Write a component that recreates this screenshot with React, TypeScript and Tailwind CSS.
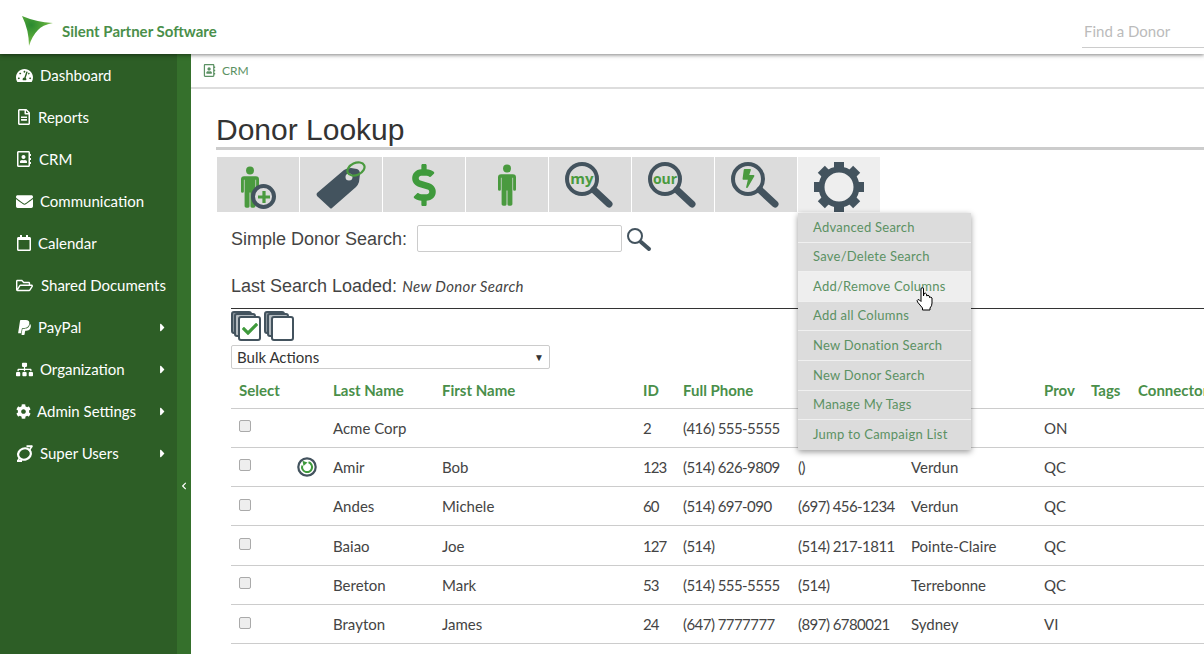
import {
  FaTachometerAlt,
  FaRegFileAlt,
  FaRegAddressBook,
  FaEnvelope,
  FaRegCalendar,
  FaRegFolderOpen,
  FaPaypal,
  FaSitemap,
  FaCog,
  FaCaretRight,
  FaChevronLeft,
  FaDollarSign,
  FaBolt,
  FaCheck,
} from "react-icons/fa"
import type { ReactNode } from "react"

const green = "#4a9a3f"
const slate = "#43535e"

function SuperIcon() {
  return (
    <svg viewBox="0 0 17 17" className="w-[17px] h-[17px]" fill="none" stroke="currentColor">
      <ellipse cx="8.500" cy="9" rx="6.500" ry="5.600" strokeWidth="2.200" transform="rotate(-20 8.500 9)" />
      <path d="M1 16 H6 M10.500 1.300 H16.500" strokeWidth="2" />
      <path d="M16 1 L13 6 M1.500 16 L4 12.500" strokeWidth="1.500" />
    </svg>
  )
}

const navItems: { label: string; icon: ReactNode; gap: string; arrow?: boolean }[] = [
  { label: "Dashboard", icon: <FaTachometerAlt size={17} />, gap: "w-[24px]" },
  { label: "Reports", icon: <FaRegFileAlt size={16} />, gap: "w-[22px]" },
  { label: "CRM", icon: <FaRegAddressBook size={16} />, gap: "w-[23px]" },
  { label: "Communication", icon: <FaEnvelope size={17} />, gap: "w-[24px]" },
  { label: "Calendar", icon: <FaRegCalendar size={16} />, gap: "w-[22px]" },
  { label: "Shared Documents", icon: <FaRegFolderOpen size={17} />, gap: "w-[25px]" },
  { label: "PayPal", icon: <FaPaypal size={17} />, gap: "w-[22px]", arrow: true },
  { label: "Organization", icon: <FaSitemap size={17} />, gap: "w-[24px]", arrow: true },
  { label: "Admin Settings", icon: <FaCog size={15} />, gap: "w-[21px]", arrow: true },
  { label: "Super Users", icon: <SuperIcon />, gap: "w-[24px]", arrow: true },
]

function Person({ className }: { className?: string }) {
  return (
    <svg viewBox="0 0 20 46" className={className} fill={green}>
      <circle cx="10" cy="4.600" r="4.400" />
      <path d="M3.500 11 H16.500 Q20 11 20 14.500 V28 Q20 29.500 18.300 29.500 Q16.800 29.500 16.800 28 V15 H16 V44.500 Q16 46 14 46 H12 Q10.500 46 10.500 44.500 V29 H9.500 V44.500 Q9.500 46 8 46 H6 Q4 46 4 44.500 V15 H3.200 V28 Q3.200 29.500 1.700 29.500 Q0 29.500 0 28 V14.500 Q0 11 3.500 11 Z" />
    </svg>
  )
}

function Magnifier({ children }: { children?: ReactNode }) {
  return (
    <div className="relative w-[50px] h-[50px] mt-[-3px]">
      <svg viewBox="0 0 50 50" className="w-[50px] h-[50px]" fill="none" stroke={slate}>
        <circle cx="17" cy="21" r="15" strokeWidth="4" />
        <path d="M29 32 L44 46" strokeWidth="7" strokeLinecap="round" />
      </svg>
      <div className="absolute left-0 top-0 w-[34px] h-[40px] flex items-center justify-center">{children}</div>
    </div>
  )
}

function Gear() {
  const teeth = [0, 45, 90, 135, 180, 225, 270, 315]
  return (
    <svg viewBox="0 0 50 50" className="w-[50px] h-[50px] mt-[5px]">
      {teeth.map((a) => (
        <rect key={a} x="20" y="0" width="10" height="8" fill={slate} transform={`rotate(${a} 25 25)`} />
      ))}
      <circle cx="25" cy="25" r="17.500" fill="none" stroke={slate} strokeWidth="6" />
    </svg>
  )
}

const tools: { node: ReactNode; light?: boolean }[] = [
  {
    node: (
      <div className="relative w-[38px] h-[47px]">
        <Person className="absolute left-[2px] top-[5px] w-[18px] h-[42px]" />
        <div className="absolute left-[12px] top-[23px] w-[25px] h-[25px] rounded-full border-[4px] border-[#43535e] bg-[#dcdcdc] flex items-center justify-center">
          <svg viewBox="0 0 12 12" className="w-[12px] h-[12px]" fill="none" stroke="#4a9a3f" strokeWidth="3.200">
            <path d="M6 0 V12 M0 6 H12" />
          </svg>
        </div>
      </div>
    ),
  },
  {
    node: (
      <div className="relative w-[50px] h-[50px]">
        <svg viewBox="0 0 50 50" className="w-[50px] h-[50px]">
          <path d="M1 33 L28 10 Q31 8 35 8 L41 9 Q44 10 44 14 L43 22 Q42 25 40 27 L16 48 Q15 49 14 48 L1 36 Q0 34 1 33 Z" fill={slate} />
          <circle cx="33" cy="17" r="3.500" fill="#dcdcdc" />
          <ellipse cx="40" cy="9" rx="9" ry="6" fill="none" stroke="#4a9a3f" strokeWidth="2.200" transform="rotate(-25 40 9)" />
        </svg>
      </div>
    ),
  },
  { node: <FaDollarSign size={42} color="#3f9a3c" /> },
  { node: <Person className="w-[18px] h-[42px]" /> },
  {
    node: (
      <Magnifier>
        <span className="text-[#4a9a3f] text-[15px] font-bold font-['Open_Sans',sans-serif]">my</span>
      </Magnifier>
    ),
  },
  {
    node: (
      <Magnifier>
        <span className="text-[#4a9a3f] text-[14px] font-bold font-['Open_Sans',sans-serif]">our</span>
      </Magnifier>
    ),
  },
  {
    node: (
      <Magnifier>
        <FaBolt size={19} color="#4a9a3f" />
      </Magnifier>
    ),
  },
  { node: <Gear />, light: true },
]

const menuItems = [
  "Advanced Search",
  "Save/Delete Search",
  "Add/Remove Columns",
  "Add all Columns",
  "New Donation Search",
  "New Donor Search",
  "Manage My Tags",
  "Jump to Campaign List",
]

const rows = [
  { last: "Acme Corp", first: "", id: "2", phone: "(416) 555-5555", phone2: "", city: "", prov: "ON" },
  { last: "Amir", first: "Bob", id: "123", phone: "(514) 626-9809", phone2: "()", city: "Verdun", prov: "QC", recur: true },
  { last: "Andes", first: "Michele", id: "60", phone: "(514) 697-090", phone2: "(697) 456-1234", city: "Verdun", prov: "QC" },
  { last: "Baiao", first: "Joe", id: "127", phone: "(514)", phone2: "(514) 217-1811", city: "Pointe-Claire", prov: "QC" },
  { last: "Bereton", first: "Mark", id: "53", phone: "(514) 555-5555", phone2: "(514)", city: "Terrebonne", prov: "QC" },
  { last: "Brayton", first: "James", id: "24", phone: "(647) 7777777", phone2: "(897) 6780021", city: "Sydney", prov: "VI" },
]

function Stack({ checked }: { checked?: boolean }) {
  return (
    <div className="relative w-[30px] h-[30px]">
      <div className="absolute left-0 top-0 w-[21px] h-[23px] rounded-[3px] border-2 border-[#43535e] bg-[#8c979e]" />
      <div className="absolute left-[3px] top-[2px] w-[22px] h-[24px] rounded-[3px] border-2 border-[#43535e] bg-[#b5bcc1]" />
      <div className="absolute left-[7px] top-[5px] w-[23px] h-[25px] rounded-[3px] border-2 border-[#43535e] bg-white flex items-center justify-center">
        {checked && <FaCheck size={16} color="#3f9a3c" />}
      </div>
    </div>
  )
}

function Pointer() {
  return (
    <svg viewBox="0 0 18 24" className="absolute left-[118px] top-[74px] w-[18px] h-[24px]">
      <path
        d="M5 2 Q5 .7 6.300 .7 Q7.500 .7 7.500 2 V9 L8 6.500 Q9.500 5.500 10.500 7 L10.800 9 Q12 7.500 13.300 9 L13.500 10.500 Q15 9.500 16 11 V16 Q16 19 14 21 V23 H6.500 V21 L1.500 15 Q.5 13 2 12.500 Q3.500 12.500 5 14.500 Z"
        fill="white"
        stroke="black"
        strokeWidth="1"
      />
    </svg>
  )
}

function App() {
  return (
    <div className="h-[654px] overflow-hidden bg-white flex flex-col font-['Lato',sans-serif]">
      <header className="relative z-20 h-[54px] shrink-0 bg-white shadow-[0_1px_4px_rgba(0,0,0,0.5)] flex items-center justify-between">
        <div className="flex items-center pl-[22px] mt-[8px]">
          <svg viewBox="0 0 32 30" className="w-[32px] h-[30px]">
            <defs>
              <radialGradient id="lg" cx="0.3" cy="0.3" r="0.9">
                <stop offset="0" stopColor="#2a8a30" />
                <stop offset="0.55" stopColor="#5fae3c" />
                <stop offset="1" stopColor="#cfe6a8" />
              </radialGradient>
            </defs>
            <path d="M0 0 Q14 6 31 7 Q20 9 16 14 Q10 20 7 30 Q7 14 0 0 Z" fill="url(#lg)" />
          </svg>
          <span className="ml-[8px] text-[15px] font-bold text-[#4a8f4a]">Silent Partner Software</span>
        </div>
        <div className="w-[122px] h-[30px] mt-[12px] pl-[2px] border-b border-[#cccccc] text-[15px] leading-[26px] text-[#bbbbbb]">Find a Donor</div>
      </header>
      <div className="flex flex-1 min-h-0">
        <aside className="w-[191px] shrink-0 flex bg-[#35702c]">
          <nav className="w-[177px] bg-[#2d5e26]">
            {navItems.map((n) => (
              <div key={n.label} className="h-[42px] pl-[16px] pr-[8px] flex items-center text-white text-[15px]">
                <span className={`${n.gap} shrink-0`}>{n.icon}</span>
                <span className="flex-1">{n.label}</span>
                {n.arrow && <FaCaretRight size={13} />}
              </div>
            ))}
          </nav>
          <div className="flex-1 flex justify-center pt-[426px] text-white">
            <FaChevronLeft size={8} className="mt-[2px]" />
          </div>
        </aside>
        <main className="flex-1 min-w-0 overflow-hidden">
          <div className="h-[35px] border-b-[2px] border-[#dddddd] pl-[12px] flex items-center text-[12px] text-[#5b9163]">
            <FaRegAddressBook size={13} />
            <span className="ml-[6px]">CRM</span>
          </div>
          <div className="pl-[25px]">
            <h1 className="mt-[23px] h-[38px] border-b-[3px] border-[#cccccc] text-[30px] leading-[36px] text-[#333333] font-['Liberation_Sans',sans-serif]">
              Donor Lookup
            </h1>
            <div className="relative mt-[7px] ml-[1px] w-fit">
              <div className="flex gap-[1px]">
                {tools.map((t, i) => (
                  <div
                    key={i}
                    className={`w-[82px] h-[55px] flex items-center justify-center ${t.light ? "bg-[#eeeeee]" : "bg-[#dcdcdc]"}`}
                  >
                    {t.node}
                  </div>
                ))}
              </div>
              <div className="absolute z-10 left-[581px] top-[56px] w-[173px] bg-[#dcdcdc] shadow-[0_2px_6px_rgba(0,0,0,0.4)] text-[13px] tracking-[0.25px] text-[#5b9163]">
                {menuItems.map((m, i) => (
                  <div
                    key={m}
                    className={`h-[29.600px] pl-[15px] flex items-center ${i < 7 ? "border-b border-[#f0f0f0]" : ""} ${i === 2 ? "bg-[#eeeeee]" : ""}`}
                  >
                    {m}
                  </div>
                ))}
                <Pointer />
              </div>
            </div>
            <div className="pl-[15px]">
              <div className="mt-[13px] flex items-center h-[27px]">
                <span className="pt-[1px] text-[18px] text-[#444444] font-['Liberation_Sans',sans-serif]">Simple Donor Search:</span>
                <div className="ml-[10px] w-[205px] h-[27px] border border-[#cccccc] rounded-[2px]" />
                <svg viewBox="0 0 26 26" className="ml-[4px] w-[26px] h-[26px] mt-[2px]" fill="none" stroke={slate}>
                  <circle cx="9" cy="9" r="7" strokeWidth="2" />
                  <path d="M15 15 L23 22" strokeWidth="4" strokeLinecap="round" />
                </svg>
              </div>
              <div className="mt-[21px] h-[35px] w-[1000px] text-[#444444]">
                <span className="text-[18px] font-['Liberation_Sans',sans-serif]">Last Search Loaded: </span>
                <i className="text-[15px] tracking-[0.35px]">New Donor Search</i>
              </div>
              <div className="w-[1000px] border-t border-[#333333] pt-[2px] flex gap-[3px]">
                <Stack checked />
                <Stack />
              </div>
              <div className="mt-[4px] w-[319px] h-[24px] border border-[#cccccc] rounded-[2px] pl-[5px] pr-[5px] pt-[1px] flex items-center justify-between text-[15px] text-[#333333]">
                Bulk Actions
                <span className="text-[10px]">▼</span>
              </div>
              <table className="mt-[3px] w-[1000px] table-fixed text-[15px] text-[#444444] border-collapse">
                <colgroup>
                  <col className="w-[102px]" />
                  <col className="w-[109px]" />
                  <col className="w-[201px]" />
                  <col className="w-[40px]" />
                  <col className="w-[115px]" />
                  <col className="w-[113px]" />
                  <col className="w-[133px]" />
                  <col className="w-[47px]" />
                  <col className="w-[47px]" />
                  <col className="w-[93px]" />
                </colgroup>
                <thead>
                  <tr className="h-[36px] border-b border-[#cccccc] text-left font-bold text-[#4a8f4a]">
                    <th className="pl-[8px] font-bold">Select</th>
                    <th className="font-bold">Last Name</th>
                    <th className="font-bold">First Name</th>
                    <th className="font-bold">ID</th>
                    <th className="font-bold">Full Phone</th>
                    <th />
                    <th />
                    <th className="font-bold">Prov</th>
                    <th className="font-bold">Tags</th>
                    <th className="font-bold whitespace-nowrap overflow-hidden">Connector</th>
                  </tr>
                </thead>
                <tbody>
                  {rows.map((r) => (
                    <tr key={r.last} className="h-[39.300px] border-b border-[#cccccc] [&>td]:pt-[1px]">
                      <td className="pl-[8px]">
                        <div className="flex items-center">
                          <span className="w-[12px] h-[12px] mb-[4px] rounded-[2px] border border-[#aaaaaa] bg-[#eeeeee]" />
                          {r.recur && (
                            <svg viewBox="0 0 20 20" className="ml-[46px] w-[20px] h-[20px]" fill="none">
                              <circle cx="10" cy="10" r="8.700" stroke={slate} strokeWidth="2.200" />
                              <path d="M11.500 5.300 A5 5 0 1 1 5.300 8.500" stroke="#3f9a3c" strokeWidth="2" />
                              <path d="M5.500 3.800 L10.500 5.500 L6.500 9 Z" fill="#3f9a3c" />
                            </svg>
                          )}
                        </div>
                      </td>
                      <td>{r.last}</td>
                      <td>{r.first}</td>
                      <td className="tracking-[-1px]">{r.id}</td>
                      <td className="tracking-[-0.55px]">{r.phone}</td>
                      <td className="tracking-[-0.55px]">{r.phone2}</td>
                      <td>{r.city}</td>
                      <td>{r.prov}</td>
                      <td />
                      <td />
                    </tr>
                  ))}
                </tbody>
              </table>
            </div>
          </div>
        </main>
      </div>
    </div>
  )
}

export default App
